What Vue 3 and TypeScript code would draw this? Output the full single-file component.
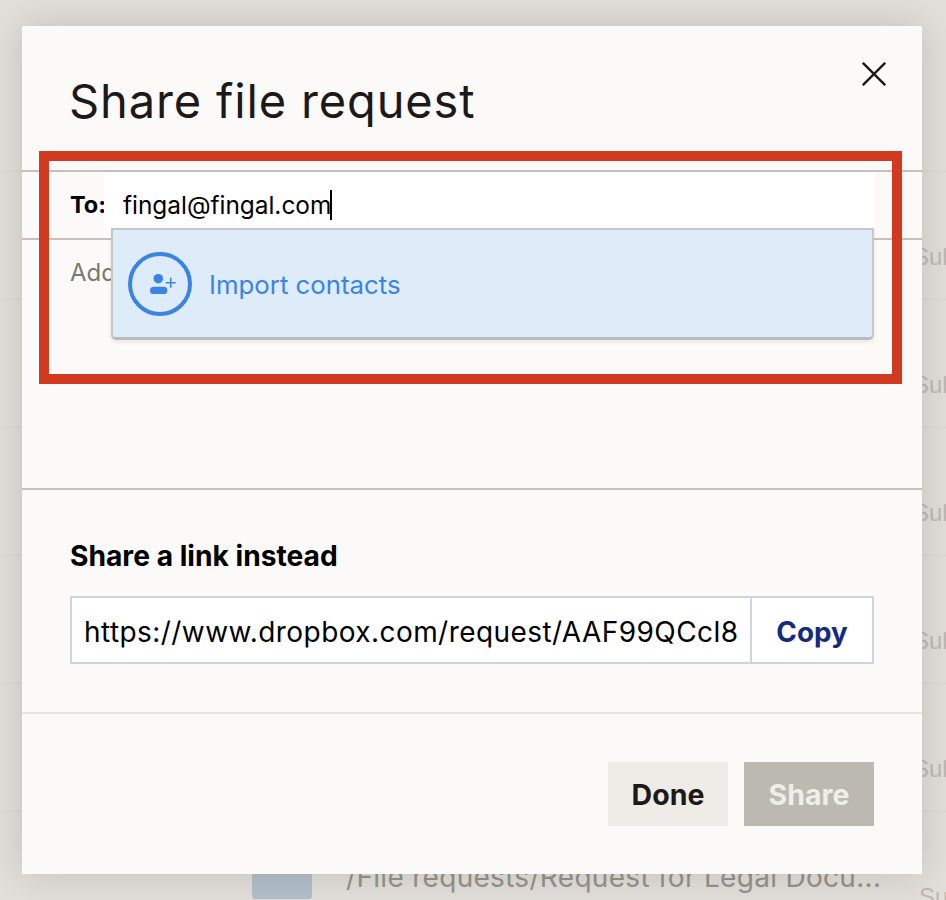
<script setup lang="ts">
const rows: { path: string; last: boolean }[] = [
  { path: '', last: false },
  { path: '', last: false },
  { path: '', last: false },
  { path: '', last: false },
  { path: '', last: false },
  { path: '/File requests/Request for Legal Docu...', last: true },
]
</script>

<template>
  <div class="page">
    <div class="rows">
      <div v-for="(row, i) in rows" :key="i" class="row" :class="{ last: row.last }">
        <div class="thumb"></div>
        <div class="path">{{ row.path }}</div>
        <div class="sub">Submitted</div>
      </div>
    </div>

    <div class="modal">
      <svg class="close" width="24" height="24" viewBox="0 0 24 24" fill="none" stroke="#1e1919" stroke-width="2.4">
        <path d="M0.8 0.8 L23.2 23.2 M23.2 0.8 L0.8 23.2" />
      </svg>
      <h1 class="title">Share file request</h1>

      <div class="to-row">
        <span class="to-label">To:</span>
        <div class="to-input">fingal@fingal.com<span class="caret"></span></div>
      </div>
      <div class="note">
        <span class="note-text">Add a message</span>
      </div>

      <div class="link-section">
        <h2 class="link-title">Share a link instead</h2>
        <div class="link-box">
          <div class="link-url">https://www.dropbox.com/request/AAF99QCcl8</div>
          <div class="copy">Copy</div>
        </div>
      </div>

      <div class="footer">
        <div class="btn done">Done</div>
        <div class="btn share">Share</div>
      </div>

      <div class="dropdown">
        <svg width="64" height="64" viewBox="0 0 64 64" fill="none">
          <circle cx="32" cy="32" r="30" stroke="#3a84e4" stroke-width="4" />
          <circle cx="30.3" cy="26.7" r="4.8" fill="#3a84e4" />
          <rect x="22" y="34.7" width="17.4" height="7.4" rx="3.7" fill="#3a84e4" />
          <path d="M42.7 25.7 V35.7 M37.7 30.7 H47.7" stroke="#3a84e4" stroke-width="1.6" />
        </svg>
        <span class="import">Import contacts</span>
      </div>
    </div>

    <div class="highlight"></div>
  </div>
</template>

<style scoped>
.page {
  position: relative;
  width: 946px;
  height: 900px;
  overflow: hidden;
  background: #e2dfda;
  font-family: Inter, "Liberation Sans", sans-serif;
}
.rows {
  padding-top: 171px;
}
.row {
  height: 128px;
  box-sizing: border-box;
  border-top: 1px solid #d9d6d1;
  display: flex;
  align-items: flex-start;
  padding-left: 252px;
}
.thumb {
  width: 60px;
  height: 60px;
  margin-top: 27px;
  border-radius: 3px;
  background: #b3bfc9;
  flex: none;
}
.path {
  width: 567px;
  margin-left: 34px;
  margin-top: 49px;
  flex: none;
  font-size: 28px;
  letter-spacing: 0.3px;
  line-height: 32px;
  color: #96928c;
  white-space: nowrap;
}
.row.last .path {
  width: 573px;
}
.sub {
  margin-top: 70px;
  flex: none;
  font-family: "Liberation Sans", sans-serif;
  font-size: 24px;
  line-height: 30px;
  color: #bdb9b3;
  white-space: nowrap;
}
.modal {
  position: absolute;
  left: 22px;
  top: 26px;
  width: 900px;
  height: 848px;
  background: #fbfaf8;
  box-shadow: 0 0 36px rgba(0, 0, 0, 0.14);
  display: flex;
  flex-direction: column;
}
.close {
  position: absolute;
  left: 840px;
  top: 36px;
}
.title {
  margin: 0;
  height: 146px;
  box-sizing: border-box;
  padding: 48px 0 0 47px;
  border-bottom: 2px solid #c6c2bb;
  font-size: 47px;
  line-height: 54px;
  font-weight: 400;
  letter-spacing: 0.85px;
  color: #1e1919;
}
.to-row {
  height: 68px;
  box-sizing: border-box;
  display: flex;
  padding: 0 48px;
  border-bottom: 2px solid #c6c2bb;
}
.to-label {
  width: 34px;
  flex: none;
  font-size: 23.5px;
  font-weight: 700;
  line-height: 66px;
  color: #000;
}
.to-input {
  flex: 1;
  background: #fff;
  border-radius: 4px;
  padding-left: 19px;
  font-size: 24.4px;
  line-height: 66px;
  color: #000;
  display: flex;
  align-items: center;
}
.caret {
  width: 2px;
  height: 30px;
  margin-left: -1px;
  background: #000;
}
.note {
  height: 250px;
  box-sizing: border-box;
  padding: 17px 0 0 48px;
  border-bottom: 2px solid #c6c2bb;
}
.note-text {
  font-size: 24px;
  line-height: 32px;
  color: #7c7770;
}
.link-section {
  height: 224px;
  box-sizing: border-box;
  padding: 48px 48px 0;
  border-bottom: 2px solid #e7e4de;
}
.link-title {
  margin: 0 0 22px;
  font-size: 28.2px;
  line-height: 36px;
  font-weight: 700;
  color: #000;
}
.link-box {
  height: 68px;
  box-sizing: border-box;
  border: 2px solid #d0d5da;
  background: #fff;
  display: flex;
}
.link-url {
  flex: 1;
  min-width: 0;
  overflow: hidden;
  white-space: nowrap;
  padding-left: 12px;
  font-size: 28px;
  letter-spacing: 0.43px;
  line-height: 68px;
  height: 64px;
  color: #000;
}
.copy {
  width: 122px;
  flex: none;
  box-sizing: border-box;
  border-left: 2px solid #d0d5da;
  text-align: center;
  font-size: 27.8px;
  font-weight: 700;
  line-height: 68px;
  height: 64px;
  color: #14297f;
}
.footer {
  display: flex;
  justify-content: flex-end;
  gap: 16px;
  padding: 48px 48px 0;
}
.btn {
  height: 64px;
  display: flex;
  align-items: center;
  justify-content: center;
  font-size: 28.5px;
  font-weight: 700;
}
.done {
  width: 120px;
  background: #eeece7;
  color: #1e1919;
}
.share {
  width: 130px;
  background: #bcb9b1;
  color: #f0eee9;
}
.dropdown {
  position: absolute;
  left: 89px;
  top: 202px;
  width: 763px;
  height: 112px;
  box-sizing: border-box;
  border: 2px solid #c5c7c9;
  border-bottom-width: 3px;
  border-bottom-color: #b9babb;
  border-radius: 0 0 5px 5px;
  background: #deebf9;
  box-shadow: 0 2px 4px rgba(0, 0, 0, 0.08);
  display: flex;
  align-items: center;
  gap: 17px;
  padding-left: 15px;
}
.import {
  margin-top: 2px;
  font-size: 25.8px;
  color: #3a84e4;
}
.highlight {
  position: absolute;
  left: 39px;
  top: 151px;
  width: 863px;
  height: 233px;
  box-sizing: border-box;
  border: 10px solid #d13a20;
}
</style>
